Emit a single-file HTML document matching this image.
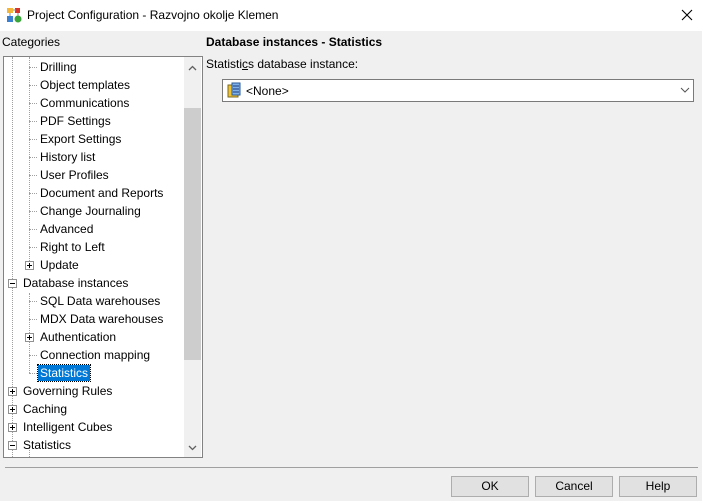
<!DOCTYPE html>
<html><head><style>
*{margin:0;padding:0;box-sizing:border-box}
body{width:702px;height:501px;background:#f0f0f0;font-family:"Liberation Sans",sans-serif;font-size:12px;color:#000;position:relative;overflow:hidden}
.a{position:absolute;white-space:nowrap}
.t{position:absolute;white-space:nowrap;line-height:16px;height:16px;padding:0 2px}
.box{position:absolute;width:9px;height:9px;border:1px solid #919191;background:#fff}
.box:before{content:"";position:absolute;left:1px;top:3px;width:5px;height:1px;background:#000}
.plus:after{content:"";position:absolute;left:3px;top:1px;width:1px;height:5px;background:#000}
.vd{position:absolute;width:1px;border-left:1px dotted #a0a0a0}
.hd{position:absolute;height:1px;border-top:1px dotted #a0a0a0}
.btn{position:absolute;top:476px;width:78px;height:21px;border:1px solid #adadad;background:#e1e1e1;text-align:center;line-height:19px}
</style></head><body>
<div class="a" style="left:0;top:0;width:702px;height:31px;background:#fff"></div>
<svg class="a" style="left:6px;top:7px" width="16" height="16"><rect x="1" y="1" width="6" height="5" fill="#f4b73a"/><rect x="9" y="1" width="5" height="5" fill="#d8342a"/><rect x="1" y="9" width="6" height="6" fill="#3a7fd0"/><circle cx="12" cy="12" r="3.5" fill="#3aa53a"/><path d="M7 3h3M4 6v3M12 6v3" stroke="#888"/></svg>
<div class="a" style="left:27px;top:8px;font-size:12px">Project Configuration - Razvojno okolje Klemen</div>
<svg class="a" style="left:681px;top:9px" width="12" height="12"><path d="M1 1l10 10M11 1L1 11" stroke="#000" stroke-width="1.1"/></svg>
<div class="a" style="left:2px;top:35px">Categories</div>
<div class="a" style="left:3px;top:56px;width:200px;height:402px;border:1px solid #828282;background:#fff;overflow:hidden">
 <div class="a" style="left:180px;top:0;width:17px;height:400px;background:#f0f0f0"></div>
 <div class="a" style="left:180px;top:51px;width:17px;height:252px;background:#cdcdcd"></div>
 <svg class="a" style="left:184px;top:8px" width="9" height="6"><path d="M1 5l3.5-3.5L8 5" stroke="#606060" stroke-width="1.3" fill="none"/></svg>
 <svg class="a" style="left:184px;top:388px" width="9" height="6"><path d="M1 1l3.5 3.5L8 1" stroke="#606060" stroke-width="1.3" fill="none"/></svg>
 <div class="vd" style="left:8px;top:0;height:400px"></div>
 <div class="vd" style="left:25px;top:0;height:210px"></div>
 <div class="vd" style="left:25px;top:236px;height:80px"></div>
 <div class="vd" style="left:25px;top:390px;height:12px"></div>
</div>
<div class="a" style="left:4px;top:57px;width:178px;height:400px">
 <div class="hd" style="left:25px;top:10px;width:8px"></div><div class="t" style="left:34px;top:2px">Drilling</div>
 <div class="hd" style="left:25px;top:28px;width:8px"></div><div class="t" style="left:34px;top:20px">Object templates</div>
 <div class="hd" style="left:25px;top:46px;width:8px"></div><div class="t" style="left:34px;top:38px">Communications</div>
 <div class="hd" style="left:25px;top:64px;width:8px"></div><div class="t" style="left:34px;top:56px">PDF Settings</div>
 <div class="hd" style="left:25px;top:82px;width:8px"></div><div class="t" style="left:34px;top:74px">Export Settings</div>
 <div class="hd" style="left:25px;top:100px;width:8px"></div><div class="t" style="left:34px;top:92px">History list</div>
 <div class="hd" style="left:25px;top:118px;width:8px"></div><div class="t" style="left:34px;top:110px">User Profiles</div>
 <div class="hd" style="left:25px;top:136px;width:8px"></div><div class="t" style="left:34px;top:128px">Document and Reports</div>
 <div class="hd" style="left:25px;top:154px;width:8px"></div><div class="t" style="left:34px;top:146px">Change Journaling</div>
 <div class="hd" style="left:25px;top:172px;width:8px"></div><div class="t" style="left:34px;top:164px">Advanced</div>
 <div class="hd" style="left:25px;top:190px;width:8px"></div><div class="t" style="left:34px;top:182px">Right to Left</div>
 <div class="box plus" style="left:21px;top:204px"></div><div class="t" style="left:34px;top:200px">Update</div>
 <div class="box" style="left:4px;top:222px"></div><div class="t" style="left:17px;top:218px">Database instances</div>
 <div class="hd" style="left:25px;top:244px;width:8px"></div><div class="t" style="left:34px;top:236px">SQL Data warehouses</div>
 <div class="hd" style="left:25px;top:262px;width:8px"></div><div class="t" style="left:34px;top:254px">MDX Data warehouses</div>
 <div class="box plus" style="left:21px;top:276px"></div><div class="t" style="left:34px;top:272px">Authentication</div>
 <div class="hd" style="left:25px;top:298px;width:8px"></div><div class="t" style="left:34px;top:290px">Connection mapping</div>
 <div class="hd" style="left:25px;top:316px;width:8px"></div><div class="t" style="left:34px;top:308px;background:#0078d7;color:#fff;outline:1px dotted #000">Statistics</div>
 <div class="box plus" style="left:4px;top:330px"></div><div class="t" style="left:17px;top:326px">Governing Rules</div>
 <div class="box plus" style="left:4px;top:348px"></div><div class="t" style="left:17px;top:344px">Caching</div>
 <div class="box plus" style="left:4px;top:366px"></div><div class="t" style="left:17px;top:362px">Intelligent Cubes</div>
 <div class="box" style="left:4px;top:384px"></div><div class="t" style="left:17px;top:380px">Statistics</div>
</div>
<div class="a" style="left:206px;top:35px;font-weight:bold">Database instances - Statistics</div>
<div class="a" style="left:206px;top:57px">Statisti<u>c</u>s database instance:</div>
<div class="a" style="left:222px;top:79px;width:472px;height:23px;border:1px solid #7a7a7a;background:#fff"></div>
<svg class="a" style="left:226px;top:82px" width="16" height="16"><rect x="2" y="3" width="10" height="12" fill="#f1c232" stroke="#7a6a20"/><rect x="6" y="1" width="8" height="12" fill="#7fb0e8" stroke="#2a5a9a"/><path d="M7 4h6M7 7h6M7 10h6" stroke="#1a3a7a"/></svg>
<div class="a" style="left:246px;top:84px">&lt;None&gt;</div>
<svg class="a" style="left:680px;top:87px" width="10" height="6"><path d="M1 1l4 4 4-4" stroke="#555" fill="none"/></svg>
<div class="a" style="left:5px;top:467px;width:693px;height:1px;background:#a0a0a0"></div>
<div class="btn" style="left:451px">OK</div>
<div class="btn" style="left:535px">Cancel</div>
<div class="btn" style="left:619px">Help</div>
</body></html>
